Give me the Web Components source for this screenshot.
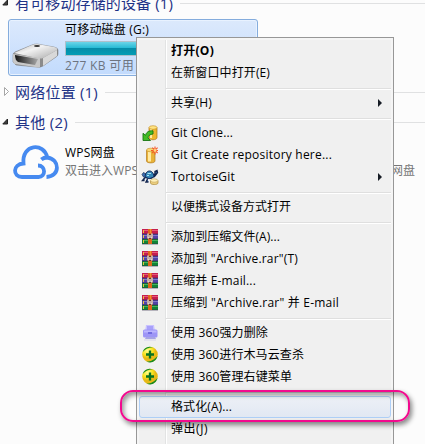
<!DOCTYPE html>
<html lang="zh-CN"><head><meta charset="utf-8"><title>计算机</title>
<style>
html,body{margin:0;width:425px;height:444px;overflow:hidden;background:#fcfcfc}
body{font-family:"Open Sans","Noto Sans CJK SC",sans-serif;font-size:12px;color:#000}
</style></head><body>
<explorer-window></explorer-window>
<script>
const icons={
clone:`<path d="M7 2.5v10c0 3 8 3 8 0v-10" fill="#edb62c" stroke="#ae7414" stroke-width=".7"/><path d="M8 4v9h2V4z" fill="#ffeaa0"/><ellipse cx="11" cy="2.5" rx="4" ry="1.8" fill="#ffe483" stroke="#c58b1c" stroke-width=".6"/><path d="M11 5.800C6.500 5.500 4 7.500 3.600 10.300L1 8.300V15.500H8.500L6 13C6 10.800 8 9.200 11 9z" fill="#42bd24" stroke="#167512" stroke-width=".9"/>`,
create:`<path d="M4.500 3v11c0 2.500 8.500 2.500 8.500 0V3" fill="#e9b338" stroke="#b17a1d" stroke-width=".7"/><path d="M6 4v10.500h3V4z" fill="#ffe9a2"/><ellipse cx="8.700" cy="3" rx="4.200" ry="1.800" fill="#f9d773" stroke="#c58b1c" stroke-width=".6"/><path d="M13-.5v8M9 3.500h7M10.300.7l5.300 5.300M15.600.7L10.300 6" stroke="#f75725" stroke-width="1.100"/><circle cx="13" cy="3.500" r="1.400" fill="#ffd77e"/>`,
turtle:`<path d="M3 8.500L.5 11.500h2M5.500 10l-1.500 3h2.500M11.500 7.500L13 4.500V2.500l2-1 .5 2-1.500 2-2 2.500" fill="#4779bc" stroke="#14264e" stroke-width="1.400"/><path d="M0 5.500l1.500-2L4 5v4L1.500 8z" fill="#3f70b5" stroke="#172b51" stroke-width=".7"/><path d="M3 7.500C3.500 3.500 5.500 2 7.500 2s4 1.500 4.500 5.500c-2 2.500-6.500 3-9 0z" fill="#3385b8" stroke="#152959"/><path d="M5.500 4.500h3.500M5 6.500h2" stroke="#a7e1ef" fill="none"/><path d="M3 8c3 2 6 2 9-.5" stroke="#152959" fill="none"/><path d="M8.500 11.500v2.500c0 2 7.500 2 7.500 0v-2.500" fill="#efd283" stroke="#a98736" stroke-width=".7"/><ellipse cx="12.200" cy="11.500" rx="3.600" ry="1.700" fill="#fff1bb" stroke="#b79548" stroke-width=".5"/>`,
rar:`<path fill="#c51d50" d="M0 0h16v5H0z"/><path fill="#e65a76" d="M1 1h15v1H1z"/><path fill="#5144a7" d="M0 5h16v5H0z"/><path fill="#8176cd" d="M1 6h15v1H1z"/><path fill="#118437" d="M0 10h16v5H0z"/><path fill="#44b45b" d="M1 11h15v1H1z"/><path d="M0 5h16M0 10h16M0 15h16" stroke="#302545" stroke-width=".6"/><path d="M1.500 1v3M1.500 6v3M1.500 11v3" stroke="#ebc03a"/><path fill="#df671b" d="M6 0h4v15H6z"/><path d="M8.500 0v4" stroke="#f38a35"/><path fill="#6d3524" d="M5 5h6v5H5z"/><path d="M6 4.500V9h1M10 4.500V9H9M8 6v3" fill="none" stroke="#fff" stroke-width="1.200"/>`,
printer:`<path d="M4 0h8l1 6H3z" fill="#c8c1ff"/><path d="M5 1h6v4H5z" fill="#a8a0fa"/><rect x="1" y="4.500" width="14.500" height="8" rx="1.500" fill="#9e96f6"/><path d="M2 5.500h12.500v2H2z" fill="#bdb7ff"/><path d="M6 7h4v2H6z" fill="#716ce0"/><path d="M4 12h9l1 2H3z" fill="#a7a4e4"/><path d="M2 15h12" stroke="#d5d3eb"/>`,
plus:`<defs><radialGradient id="g" cx="35%" cy="25%"><stop stop-color="#ffff8c"/><stop offset=".65" stop-color="#f8e21f"/><stop offset="1" stop-color="#e7b916"/></radialGradient></defs><circle cx="8" cy="7.500" r="7.800" fill="url(#g)"/><path d="M.7 5C2 1 6-1.500 11 .6 6 .5 4 2 .7 5zM15.500 9c-1 5-6 8-11 5.500 5 0 8-2 11-5.500z" fill="#168c22"/><path d="M8 3.500v8M4 7.500h8" stroke="#087222" stroke-width="2.300"/>`
};
const define=(name,css,html,ready)=>customElements.define(name,class extends HTMLElement{
 connectedCallback(){if(this.shadowRoot)return;const r=this.attachShadow({mode:'open'});r.innerHTML=`<style>:host,*{box-sizing:border-box}${css}</style>${typeof html==='function'?html(this):html}`;if(ready)ready(this,r)}
});
// Label whose glyph spacing spreads to the width given in "w".
define('fit-text',':host{display:inline-block;white-space:pre;line-height:18px}span{display:inline-block}','<span><slot></slot></span>',(e,r)=>{
 const s=r.querySelector('span'),w=+e.getAttribute('w');
 if(w){const n=s.getBoundingClientRect().width;s.style.letterSpacing=(w-n)/e.textContent.length+'px';s.style.width=w+'px'}
});
define('menu-separator',':host{display:block;height:8px;padding:4px 0 0 27px}div{height:2px;background:linear-gradient(#dfdfdf 50%,#fff 50%)}','<div></div>');
define('menu-item',`:host{display:flex;align-items:center;height:22px;border:1px solid transparent;padding:0 8px 0 31px}
:host([active]){border-color:#aecff7;border-radius:3px;background:linear-gradient(#edf0f6,#e1e8f3)}
:host([bold]){font-weight:700}.i{width:16px;height:16px;margin-left:-29px;margin-right:13px;flex:none}.a{margin-left:auto;width:4px;height:8px;flex:none}`,
 e=>{const i=e.getAttribute('icon');return `${i?`<svg class="i" viewBox="0 0 16 16" overflow="visible">${icons[i]}</svg>`:''}<fit-text w="${e.getAttribute('w')}">${e.getAttribute('label')}</fit-text>${e.hasAttribute('sub')?'<svg class="a" viewBox="0 0 4 8"><path d="M0 0l4 4-4 4z" fill="#171c25"/></svg>':''}`});
define('context-menu',`:host{position:absolute;left:136px;top:37px;width:258px;height:420px;display:block;border:1px solid #979797;padding:2px;background:linear-gradient(90deg,transparent 28px,#e2e3e3 28px,#e2e3e3 29px,#fff 29px,#fff 30px,transparent 30px),#f0f0f0;box-shadow:inset 0 0 0 2px #f5f5f5}`,'<slot></slot>');
define('group-heading',`:host{display:flex;align-items:center;height:30px;font-size:15px;color:#1e3287;padding-left:2px}svg{width:8px;height:10px;margin-right:5px;flex:none}i{height:1px;background:#e0e1e2;flex:1;margin-left:7px}`,
 e=>`<svg viewBox="0 0 8 10">${e.hasAttribute('closed')?'<path d="M2.500 0.500l4 4-4 4z" fill="#fff" stroke="#a6a6a6"/>':'<path d="M5.500 2v5H.8z" fill="#404040" stroke="#222"/>'}</svg><fit-text w="${e.getAttribute('w')}">${e.getAttribute('label')}</fit-text><i></i>`);
define('drive-tile',`:host{display:flex;width:250px;height:57px;margin:1px 0 1px 8px;border:1px solid #84acdd;border-radius:3px;background:linear-gradient(#dce9fc,#c2dbfd);box-shadow:inset 0 0 0 1px #e8f2ff}
svg{width:48px;height:42px;margin:14px 0 0 3px;flex:none}div{display:flex;flex-direction:column;padding:1px 0 0 5px;flex:1}.b{height:15px;margin:2px 5px 1px 0;border:1px solid #afc0cb;background:linear-gradient(#6bd5e8,#25bad4 46%,#058ca8 50%,#039db5)}.s{color:#6d7480}`,
`<svg viewBox="0 0 48 42"><defs><linearGradient id="t" x2="1" y2="1"><stop stop-color="#b5b5b5"/><stop offset=".4" stop-color="#f2f2f2"/><stop offset="1" stop-color="#aaa"/></linearGradient><linearGradient id="k" x2="1"><stop stop-color="#161616"/><stop offset="1" stop-color="#a8a8a8"/></linearGradient></defs><path d="M1 28v-7q0-2 2-3L20 11q2-1 5-1l17 3q4 1 4 3v4q0 2-2 3L31 32q-3 2-7 1L4 31z" fill="#8b8b8b" stroke="#777" stroke-width=".5"/><path d="M2 19L20 11q2-1 5-1l17 3q4 1 3 3L31 24q-2 1-6 0z" fill="url(#t)"/><path d="M1 20l27 4v9q-2 1-5 0L3 30q-2 0-2-4z" fill="#c8c8c8"/><path d="M3 21l23 4-3 6-17-3q-3-2-3-7z" fill="url(#k)"/><path d="M31 24l14-8v6l-14 10z" fill="#d8d8d8"/><ellipse cx="25" cy="12" rx="3" ry="1" fill="#333"/></svg><div><fit-text w="84">可移动磁盘 (G:)</fit-text><span class="b"></span><fit-text class="s" w="69">277 KB 可用</fit-text></div>`);
define('cloud-tile',`:host{display:flex;padding:7px 10px 0 12px}svg{width:48px;height:38px;margin-right:5px;flex:none}div{flex:1}p{margin:0;display:flex;justify-content:space-between;color:#777;height:18px}p:first-child{color:#000}`,
`<svg viewBox="0 0 48 38"><path d="M26 21.500c8 0 8 11.500.5 11.500H10C.5 33 .5 20 11.500 19.500 9.500 0 32-2 35.300 13.500 48 15 48.500 32.500 34.500 33M11.500 19.500V21M35.300 13.500q-3.500 0-6 2" fill="none" stroke="#468af0" stroke-width="3.800"/></svg><div><p><fit-text w="50">WPS网盘</fit-text></p><p><fit-text w="73">双击进入WPS</fit-text><fit-text w="24">网盘</fit-text></p></div>`);
define('highlight-ring',`:host{position:absolute;left:120px;top:390px;width:290px;height:32px;border:2px solid #f20a8e;border-radius:13px;box-shadow:2px 3px 5px #0007,inset 2px 3px 5px #0006}`,'');
define('explorer-window',`:host{display:block;position:relative;width:425px;height:444px;overflow:hidden}main{display:flow-root}group-heading.f{margin-top:-12px}`,
`<main><group-heading class="f" w="158" label="有可移动存储的设备 (1)"></group-heading><drive-tile></drive-tile><group-heading closed w="83" label="网络位置 (1)"></group-heading><group-heading w="53" label="其他 (2)"></group-heading><cloud-tile></cloud-tile></main>
<context-menu>
<menu-item bold w="43" label="打开(O)"></menu-item><menu-item w="99" label="在新窗口中打开(E)"></menu-item><menu-separator></menu-separator>
<menu-item sub w="41" label="共享(H)"></menu-item><menu-separator></menu-separator>
<menu-item icon="clone" w="62" label="Git Clone..."></menu-item><menu-item icon="create" w="161" label="Git Create repository here..."></menu-item><menu-item icon="turtle" sub w="64" label="TortoiseGit"></menu-item><menu-separator></menu-separator>
<menu-item w="120" label="以便携式设备方式打开"></menu-item><menu-separator></menu-separator>
<menu-item icon="rar" w="109" label="添加到压缩文件(A)..."></menu-item><menu-item icon="rar" w="127" label='添加到 &quot;Archive.rar&quot;(T)'></menu-item><menu-item icon="rar" w="85" label="压缩并 E-mail..."></menu-item><menu-item icon="rar" w="168" label='压缩到 &quot;Archive.rar&quot; 并 E-mail'></menu-item><menu-separator></menu-separator>
<menu-item icon="printer" w="97" label="使用 360强力删除"></menu-item><menu-item icon="plus" w="133" label="使用 360进行木马云查杀"></menu-item><menu-item icon="plus" w="121" label="使用 360管理右键菜单"></menu-item><menu-separator></menu-separator>
<menu-item active w="61" label="格式化(A)..."></menu-item><menu-item w="37" label="弹出(J)"></menu-item>
</context-menu><highlight-ring></highlight-ring>`);
</script></body></html>
